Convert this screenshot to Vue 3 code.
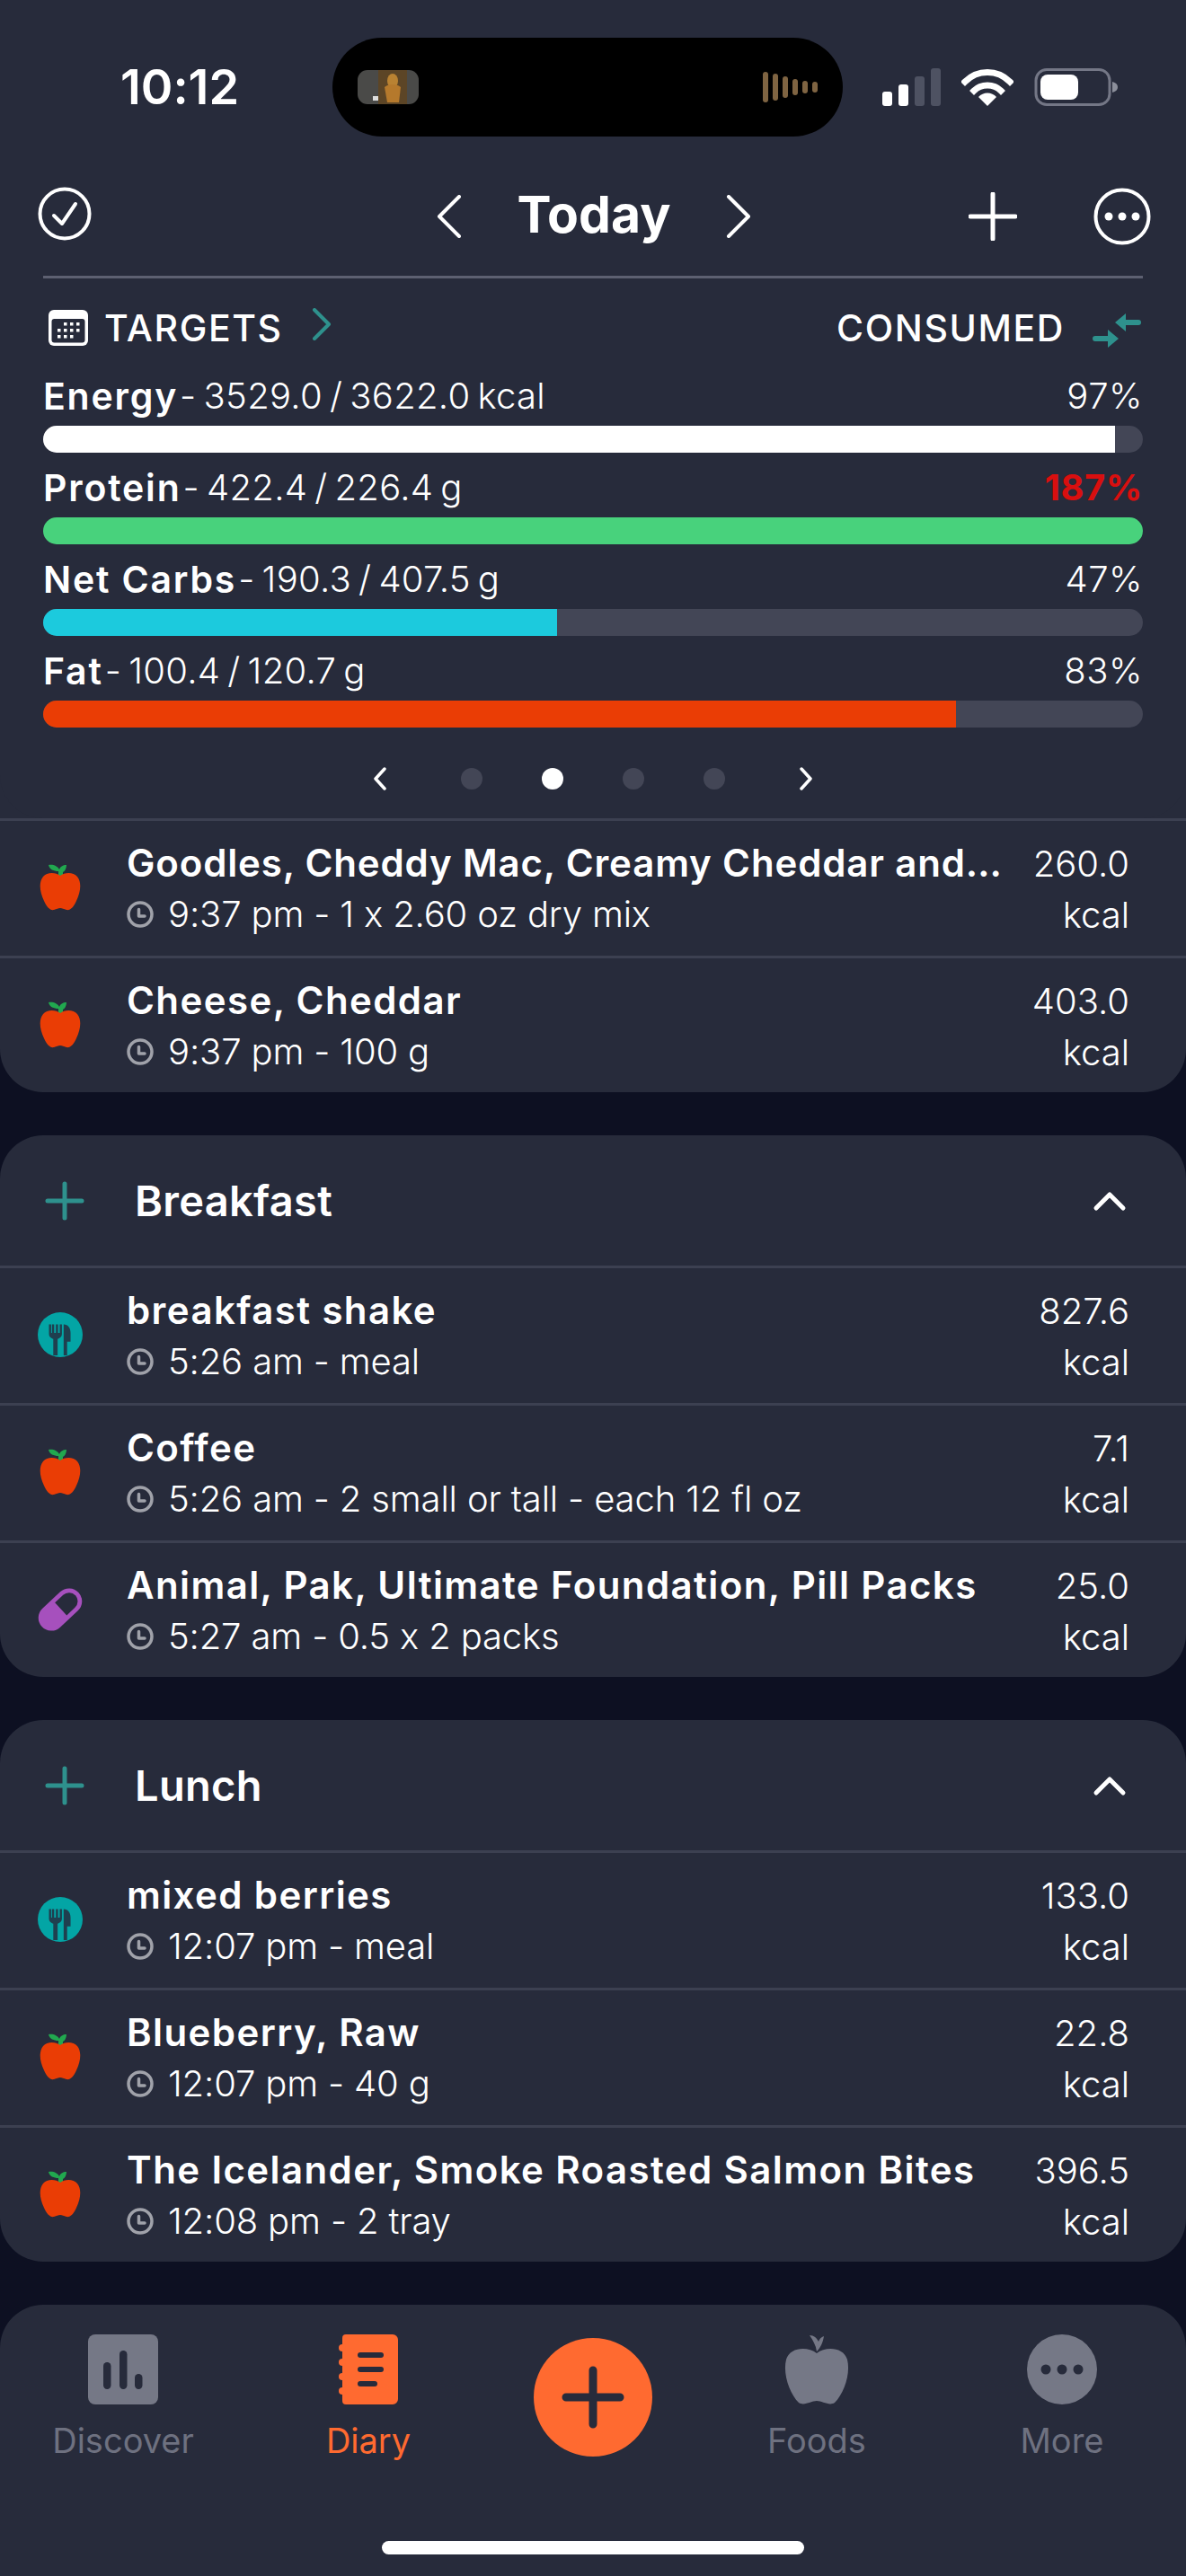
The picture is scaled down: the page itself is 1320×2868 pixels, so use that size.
<script setup>
const macros = [
  { name: 'Energy', value: '3529.0 / 3622.0 kcal', pct: '97%', fill: 97.5, color: '#ffffff' },
  { name: 'Protein', value: '422.4 / 226.4 g', pct: '187%', fill: 100, color: '#48d27c', over: true },
  { name: 'Net Carbs', value: '190.3 / 407.5 g', pct: '47%', fill: 46.7, color: '#1ccadd' },
  { name: 'Fat', value: '100.4 / 120.7 g', pct: '83%', fill: 83, color: '#ea3d05' }
]

const sections = [
  {
    title: '',
    items: [
      { icon: 'apple', name: 'Goodles, Cheddy Mac, Creamy Cheddar and…', sub: '9:37 pm - 1 x 2.60 oz dry mix', kcal: '260.0', tight: true },
      { icon: 'apple', name: 'Cheese, Cheddar', sub: '9:37 pm - 100 g', kcal: '403.0' }
    ]
  },
  {
    title: 'Breakfast',
    items: [
      { icon: 'meal', name: 'breakfast shake', sub: '5:26 am - meal', kcal: '827.6' },
      { icon: 'apple', name: 'Coffee', sub: '5:26 am - 2 small or tall - each 12 fl oz', kcal: '7.1' },
      { icon: 'pill', name: 'Animal, Pak, Ultimate Foundation, Pill Packs', sub: '5:27 am - 0.5 x 2 packs', kcal: '25.0' }
    ]
  },
  {
    title: 'Lunch',
    items: [
      { icon: 'meal', name: 'mixed berries', sub: '12:07 pm - meal', kcal: '133.0' },
      { icon: 'apple', name: 'Blueberry, Raw', sub: '12:07 pm - 40 g', kcal: '22.8' },
      { icon: 'apple', name: 'The Icelander, Smoke Roasted Salmon Bites', sub: '12:08 pm - 2 tray', kcal: '396.5' }
    ]
  }
]

const dots = [0, 1, 2, 3]
const wave = [34, 30, 24, 18, 14, 12]
</script>

<template>
  <div class="page">
    <header class="top">
      <div class="status">
        <div class="time">10:12</div>
        <div class="island">
          <svg class="art" width="68" height="38" viewBox="0 0 68 38">
            <rect width="68" height="38" rx="11" fill="#4a4a48" />
            <rect x="23" width="32" height="38" fill="#5c4526" />
            <ellipse cx="39" cy="12" rx="6" ry="8" fill="#b98232" />
            <path d="M30 19C34 15 44 15 48 19L46 36H33Z" fill="#b5792c" />
            <rect x="17" y="29" width="6" height="5" fill="#ddd" />
          </svg>
          <div class="wave">
            <span v-for="(h, i) in wave" :key="i" class="wave-bar" :style="{ height: h + 'px' }"></span>
          </div>
        </div>
        <div class="sys">
          <svg width="66" height="42" viewBox="0 0 66 42">
            <rect x="1" y="26" width="11" height="16" rx="3" fill="#fff" />
            <rect x="19" y="18" width="11" height="24" rx="3" fill="#fff" />
            <rect x="37" y="9" width="11" height="33" rx="3" fill="#4e5262" />
            <rect x="55" y="0" width="11" height="42" rx="3" fill="#4e5262" />
          </svg>
          <svg width="58" height="42" viewBox="0 0 58 42">
            <path d="M4 15C18 1 40 1 54 15" fill="none" stroke="#fff" stroke-width="7" stroke-linecap="square" />
            <path d="M14 25C22 17 36 17 44 25" fill="none" stroke="#fff" stroke-width="7" stroke-linecap="square" />
            <path d="M19 32C24 26 34 26 39 32L29 42Z" fill="#fff" />
          </svg>
          <svg width="94" height="42" viewBox="0 0 94 42">
            <rect x="2" y="1.5" width="82" height="39" rx="12" fill="none" stroke="#747786" stroke-width="3" />
            <rect x="7" y="7" width="42" height="28" rx="8" fill="#fff" />
            <path d="M87 15C91 16 93 18 93 21C93 24 91 26 87 27Z" fill="#8c8f9b" />
          </svg>
        </div>
      </div>

      <div class="nav">
        <svg class="nav-check" width="60" height="60" viewBox="0 0 60 60" fill="none" stroke="#fff">
          <circle cx="30" cy="30" r="27.5" stroke-width="4" />
          <path d="M18 32L27 41L42 19" stroke-width="4" stroke-linecap="round" stroke-linejoin="round" />
        </svg>
        <div class="nav-mid">
          <svg width="28" height="48" viewBox="0 0 28 48" fill="none" stroke="#fff" stroke-width="4" stroke-linecap="round" stroke-linejoin="round"><path d="M25 2L3 24L25 46" /></svg>
          <h1 class="today">Today</h1>
          <svg width="28" height="48" viewBox="0 0 28 48" fill="none" stroke="#fff" stroke-width="4" stroke-linecap="round" stroke-linejoin="round"><path d="M3 2L25 24L3 46" /></svg>
        </div>
        <div class="nav-right">
          <svg width="54" height="54" viewBox="0 0 54 54" fill="none" stroke="#fff" stroke-width="5" stroke-linecap="round"><path d="M27 2V52M2 27H52" /></svg>
          <svg width="64" height="64" viewBox="0 0 64 64">
            <circle cx="32" cy="32" r="29.5" fill="none" stroke="#fff" stroke-width="4" />
            <circle cx="17" cy="32" r="4.5" fill="#fff" />
            <circle cx="32" cy="32" r="4.5" fill="#fff" />
            <circle cx="47" cy="32" r="4.5" fill="#fff" />
          </svg>
        </div>
      </div>
      <div class="divider"></div>

      <div class="targets">
        <div class="targets-left">
          <svg width="44" height="40" viewBox="0 0 44 40">
            <path d="M6 0H38A6 6 0 0 1 44 6V34A6 6 0 0 1 38 40H6A6 6 0 0 1 0 34V6A6 6 0 0 1 6 0Z" fill="#fff" />
            <rect x="3.5" y="10" width="37" height="26.5" rx="3" fill="#272b3b" />
            <g fill="#fff">
              <rect x="17" y="14" width="3.5" height="3.5" /><rect x="24" y="14" width="3.5" height="3.5" /><rect x="31" y="14" width="3.5" height="3.5" />
              <rect x="10" y="21" width="3.5" height="3.5" /><rect x="17" y="21" width="3.5" height="3.5" /><rect x="24" y="21" width="3.5" height="3.5" /><rect x="31" y="21" width="3.5" height="3.5" />
              <rect x="10" y="28" width="3.5" height="3.5" /><rect x="17" y="28" width="3.5" height="3.5" /><rect x="24" y="28" width="3.5" height="3.5" />
            </g>
          </svg>
          <span class="targets-label">TARGETS</span>
          <svg class="teal-chev" width="22" height="36" viewBox="0 0 22 36" fill="none" stroke="#2e918d" stroke-width="4" stroke-linecap="round" stroke-linejoin="round"><path d="M3 2L19 18L3 34" /></svg>
        </div>
        <div class="targets-right">
          <span class="targets-label">CONSUMED</span>
          <svg width="56" height="38" viewBox="0 0 56 38" fill="#2e918d">
            <path d="M26 10L38 0V7H52A3 3 0 0 1 52 13H38V20Z" />
            <path d="M30 28L18 38V31H4A3 3 0 0 1 4 25H18V18Z" />
          </svg>
        </div>
      </div>

      <div class="macro" v-for="m in macros" :key="m.name">
        <div class="macro-text">
          <span class="macro-name">{{ m.name }}</span>
          <span class="macro-value">- {{ m.value }}</span>
          <span class="macro-pct" :class="{ over: m.over }">{{ m.pct }}</span>
        </div>
        <div class="bar">
          <div class="bar-fill" :style="{ width: m.fill + '%', background: m.color }"></div>
        </div>
      </div>

      <div class="pager">
        <svg width="16" height="26" viewBox="0 0 16 26" fill="none" stroke="#fff" stroke-width="3.5" stroke-linecap="round" stroke-linejoin="round"><path d="M13 2L3 13L13 24" /></svg>
        <div class="dots">
          <span v-for="d in dots" :key="d" class="dot" :class="{ active: d === 1 }"></span>
        </div>
        <svg width="16" height="26" viewBox="0 0 16 26" fill="none" stroke="#fff" stroke-width="3.5" stroke-linecap="round" stroke-linejoin="round"><path d="M3 2L13 13L3 24" /></svg>
      </div>
    </header>

    <main class="list">
      <section v-for="(s, si) in sections" :key="si" class="card" :class="{ first: !s.title }">
        <div v-if="s.title" class="card-head">
          <svg width="44" height="44" viewBox="0 0 44 44" fill="none" stroke="#2e918d" stroke-width="5" stroke-linecap="round"><path d="M22 3V41M3 22H41" /></svg>
          <span class="card-title">{{ s.title }}</span>
          <svg class="collapse" width="38" height="24" viewBox="0 0 38 24" fill="none" stroke="#fff" stroke-width="5" stroke-linecap="round" stroke-linejoin="round"><path d="M4 20L19 5L34 20" /></svg>
        </div>
        <div v-for="item in s.items" :key="item.name" class="row">
          <div class="row-icon">
            <svg v-if="item.icon === 'apple'" width="46" height="52" viewBox="0 0 46 52">
              <path d="M21 8C16 8 11 6 10 1C15 0 20 2 22 6C23 3 26 1 30 1C30 5 28 8 26 9V14H21Z" fill="#21a84f" />
              <path d="M23 13C28 9 38 9 42 14C47 20 46 31 41 41C38 48 34 52 30 51C27 50 25 49 23 49C21 49 19 50 16 51C12 52 8 48 5 41C0 31 -1 20 4 14C8 9 18 9 23 13Z" fill="#ea3d05" />
            </svg>
            <svg v-else-if="item.icon === 'meal'" width="52" height="52" viewBox="0 0 52 52">
              <circle cx="26" cy="26" r="26" fill="#03a5a5" />
              <path d="M13 14V25C13 29 16 30 18 31V50H23V31C25 30 28 29 28 25V14H25.5V24H23.5V14H21V24H19V14H16.5V24H15.5V14Z" fill="#1f3f4f" />
              <path d="M30 14C35 14 38 18 38 24V34H34V50H30Z" fill="#1f3f4f" />
            </svg>
            <svg v-else width="52" height="52" viewBox="0 0 52 52">
              <g transform="rotate(-43 26 26)">
                <rect x="-3" y="11" width="58" height="30" rx="15" fill="#a650bd" />
                <path d="M27 16H40A10 10 0 0 1 40 36H27Z" fill="#272b3b" />
              </g>
            </svg>
          </div>
          <div class="row-main">
            <div class="row-name" :class="{ tight: item.tight }">{{ item.name }}</div>
            <div class="row-sub">
              <svg width="30" height="30" viewBox="0 0 30 30" fill="none" stroke="#a0a2aa" stroke-width="3.5">
                <circle cx="15" cy="15" r="13" />
                <path d="M13.5 9.5V17H20" stroke-width="3.5" stroke-linecap="round" stroke-linejoin="round" />
              </svg>
              <span>{{ item.sub }}</span>
            </div>
          </div>
          <div class="row-kcal">
            <div>{{ item.kcal }}</div>
            <div>kcal</div>
          </div>
        </div>
      </section>
    </main>

    <nav class="tabs">
      <div class="tab">
        <svg width="78" height="78" viewBox="0 0 78 78">
          <rect width="78" height="78" rx="8" fill="#757886" />
          <g fill="#272b3b">
            <rect x="17" y="31" width="8.5" height="30" rx="4.2" />
            <rect x="35" y="18" width="8.5" height="43" rx="4.2" />
            <rect x="52" y="44" width="8.5" height="17" rx="4.2" />
          </g>
        </svg>
        <span class="tab-label">Discover</span>
      </div>
      <div class="tab active">
        <svg width="66" height="78" viewBox="0 0 66 78">
          <path d="M8 0H60A6 6 0 0 1 66 6V72A6 6 0 0 1 60 78H8A4 4 0 0 1 4 74V4A4 4 0 0 1 8 0Z" fill="#ff6a30" />
          <g fill="#ff6a30">
            <circle cx="4" cy="15" r="4" /><circle cx="4" cy="31" r="4" /><circle cx="4" cy="47" r="4" /><circle cx="4" cy="63" r="4" />
          </g>
          <g fill="#272b3b">
            <rect x="21" y="20" width="29" height="6" rx="3" />
            <rect x="21" y="36" width="29" height="6" rx="3" />
            <rect x="21" y="52" width="22" height="6" rx="3" />
          </g>
        </svg>
        <span class="tab-label">Diary</span>
      </div>
      <div class="tab plus-wrap">
        <svg width="132" height="132" viewBox="0 0 132 132">
          <circle cx="66" cy="66" r="66" fill="#ff6a30" />
          <path d="M66 36V96M36 66H96" fill="none" stroke="#272b3b" stroke-width="9" stroke-linecap="round" />
        </svg>
      </div>
      <div class="tab">
        <svg width="72" height="78" viewBox="0 0 72 78">
          <path d="M36 19C35 12 32 7 28 1C33 1 36 4 38 8C39 5 41 3 44 2C43 9 40 15 36 19Z" fill="#757886" />
          <path d="M36 21C46 13 66 14 70 28C74 44 66 66 56 76C50 80 42 74 36 74C30 74 22 80 16 76C6 66 -2 44 2 28C6 14 26 13 36 21Z" fill="#757886" />
        </svg>
        <span class="tab-label">Foods</span>
      </div>
      <div class="tab">
        <svg width="78" height="78" viewBox="0 0 78 78">
          <circle cx="39" cy="39" r="39" fill="#757886" />
          <g fill="#272b3b"><circle cx="21" cy="39" r="5.5" /><circle cx="39" cy="39" r="5.5" /><circle cx="57" cy="39" r="5.5" /></g>
        </svg>
        <span class="tab-label">More</span>
      </div>
      <div class="home-bar"></div>
    </nav>
  </div>
</template>

<style>
html, body {
  margin: 0;
  background: #0d1022;
}
</style>

<style scoped>
.page {
  width: 1320px;
  height: 2868px;
  overflow: hidden;
  display: flex;
  flex-direction: column;
  background: #0d1022;
  color: #fff;
  font-family: Inter, 'Liberation Sans', sans-serif;
  font-feature-settings: 'calt' 0;
}

.top {
  position: relative;
  z-index: 2;
  height: 911px;
  flex: none;
  box-sizing: border-box;
  background: #272b3b;
  border-radius: 0 0 48px 48px;
}

.status {
  display: flex;
  align-items: center;
  height: 152px;
  box-sizing: border-box;
  padding-top: 42px;
}
.time {
  width: 370px;
  padding-left: 30px;
  box-sizing: border-box;
  text-align: center;
  font-size: 54px;
  font-weight: 600;
  letter-spacing: 0;
  line-height: 110px;
}
.island {
  width: 568px;
  height: 110px;
  flex: none;
  background: #000;
  border-radius: 55px;
  display: flex;
  align-items: center;
  justify-content: space-between;
  padding: 0 28px;
  box-sizing: border-box;
}
.art { display: block; }
.wave {
  display: flex;
  align-items: center;
  gap: 5px;
}
.wave-bar {
  width: 6px;
  border-radius: 3px;
  background: #7f6442;
}
.sys {
  flex: 1;
  display: flex;
  align-items: center;
  gap: 23px;
  padding-left: 43px;
}

.nav {
  position: relative;
  height: 155px;
  box-sizing: border-box;
  padding: 22px 42px 0 42px;
  display: flex;
  align-items: center;
  justify-content: space-between;
}
.nav-check { margin-top: -6px; }
.nav-mid {
  position: absolute;
  left: 486px;
  top: 22px;
  width: 350px;
  height: 133px;
  display: flex;
  align-items: center;
  justify-content: space-between;
}
.today {
  margin: -3px 0 0;
  font-size: 57px;
  font-weight: 700;
  letter-spacing: 0;
  line-height: 70px;
}
.nav-right {
  display: flex;
  align-items: center;
  gap: 85px;
  margin-right: -3px;
}
.divider {
  height: 3px;
  margin: 0 48px;
  background: #5d6071;
}

.targets {
  height: 92px;
  box-sizing: border-box;
  padding: 18px 49px 0 54px;
  display: flex;
  align-items: center;
  justify-content: space-between;
}
.targets-left,
.targets-right {
  display: flex;
  align-items: center;
}
.targets-label {
  font-size: 41px;
  font-weight: 500;
  letter-spacing: 1.6px;
  margin-left: 18px;
}
.teal-chev { margin-left: 32px; margin-top: -8px; }
.targets-right svg { margin-left: 30px; margin-top: 6px; }

.macro {
  padding: 0 48px;
}
.macro-text {
  height: 72px;
  box-sizing: border-box;
  padding-top: 6px;
  display: flex;
  align-items: center;
  font-size: 40px;
  line-height: 66px;
}
.macro-name {
  font-size: 41px;
  font-weight: 600;
  letter-spacing: 1.8px;
}
.macro-value {
  font-weight: 300;
  margin-left: 2px;
  letter-spacing: 0.3px;
  word-spacing: -3.5px;
}
.macro-pct {
  margin-left: auto;
  font-weight: 300;
  letter-spacing: 0.5px;
}
.macro-pct.over {
  color: #d90f0f;
  font-weight: 700;
}
.bar {
  height: 30px;
  border-radius: 15px;
  overflow: hidden;
  background: #434656;
}
.bar-fill {
  height: 100%;
}

.pager {
  height: 98px;
  box-sizing: border-box;
  padding-top: 16px;
  display: flex;
  align-items: center;
  justify-content: center;
  gap: 82px;
}
.dots {
  display: flex;
  gap: 66px;
}
.dot {
  width: 24px;
  height: 24px;
  border-radius: 50%;
  background: #434656;
}
.dot.active {
  background: #fff;
}

.list {
  flex: 1;
  display: flex;
  flex-direction: column;
  gap: 48px;
}
.card {
  background: #272b3b;
  border-radius: 48px;
  overflow: hidden;
}
.card.first {
  margin-top: -48px;
  padding-top: 48px;
  border-radius: 0 0 48px 48px;
}
.card-head {
  height: 145px;
  display: flex;
  align-items: center;
  padding: 0 64px 0 50px;
}
.card-title {
  margin-left: 56px;
  font-size: 47px;
  font-weight: 600;
  letter-spacing: 0.3px;
}
.collapse { margin-left: auto; margin-right: 2px; }

.row {
  height: 153px;
  box-sizing: border-box;
  border-top: 3px solid #3c4051;
  padding: 19px 63px 0 42px;
  display: flex;
  gap: 33px;
}
.card .row:last-child { height: 152px; }
.row-icon {
  width: 50px;
  height: 110px;
  flex: none;
  display: flex;
  align-items: center;
  justify-content: center;
}
.row-main {
  flex: 1;
  min-width: 0;
  padding-left: 16px;
}
.row-name {
  font-size: 42px;
  font-weight: 600;
  letter-spacing: 1.4px;
  line-height: 56px;
  white-space: nowrap;
}
.row-name.tight {
  letter-spacing: 0.85px;
}
.row-sub {
  margin-top: 1px;
  display: flex;
  align-items: center;
  gap: 16px;
  font-size: 40px;
  font-weight: 300;
  letter-spacing: -0.15px;
  line-height: 56px;
  white-space: nowrap;
}
.row-kcal {
  flex: none;
  min-width: 110px;
  text-align: right;
  font-size: 40px;
  font-weight: 300;
  line-height: 57px;
}

.tabs {
  position: relative;
  height: 302px;
  flex: none;
  box-sizing: border-box;
  margin-top: 48px;
  padding-top: 33px;
  background: #272b3b;
  border-radius: 48px 48px 0 0;
  display: grid;
  grid-template-columns: 274px 272px 228px 270px 276px;
  align-items: start;
}
.tab {
  display: flex;
  flex-direction: column;
  align-items: center;
}
.tab svg { display: block; }
.tab-label {
  margin-top: 16px;
  font-size: 38px;
  line-height: 48px;
  color: #6e7180;
}
.tab.active .tab-label {
  color: #ff6a30;
}
.plus-wrap {
  padding-top: 4px;
}
.home-bar {
  position: absolute;
  left: 425px;
  bottom: 24px;
  width: 470px;
  height: 15px;
  border-radius: 8px;
  background: #fff;
}
</style>
